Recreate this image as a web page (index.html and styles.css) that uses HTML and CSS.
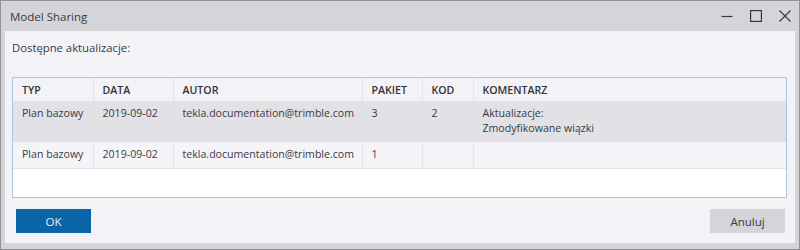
FILE: index.html
```html
<!DOCTYPE html>
<html lang="pl">
<head>
  <meta charset="UTF-8" />
  <title>Model Sharing</title>
  <link rel="stylesheet" href="styles.css">
</head>
<body>

  <div class="window">
    <!-- Title bar -->
    <div class="titlebar">
      <span class="title">Model Sharing</span>
      <div class="controls">
        <svg width="12" height="12" viewBox="0 0 12 12"><path d="M0.5 6.5h11" stroke="#3a3a3e" stroke-width="1.2"/></svg>
        <svg width="12" height="12" viewBox="0 0 12 12"><rect x="0.6" y="0.6" width="10.8" height="10.8" fill="none" stroke="#3a3a3e" stroke-width="1.2"/></svg>
        <svg width="12" height="12" viewBox="0 0 12 12"><path d="M0.5 0.5l11 11M11.5 0.5l-11 11" stroke="#3a3a3e" stroke-width="1.2"/></svg>
      </div>
    </div>

    <!-- Content -->
    <div class="content">
      <p class="label">Dostępne aktualizacje:</p>

      <div class="grid-box">
        <table class="updates">
          <thead>
            <tr>
              <th class="c-typ">TYP</th>
              <th class="c-data">DATA</th>
              <th class="c-autor">AUTOR</th>
              <th class="c-pakiet">PAKIET</th>
              <th class="c-kod">KOD</th>
              <th>KOMENTARZ</th>
            </tr>
          </thead>
          <tbody>
            <tr class="selected">
              <td>Plan bazowy</td>
              <td>2019-09-02</td>
              <td>tekla.documentation@trimble.com</td>
              <td>3</td>
              <td>2</td>
              <td>Aktualizacje:<br>Zmodyfikowane wiązki</td>
            </tr>
            <tr>
              <td>Plan bazowy</td>
              <td>2019-09-02</td>
              <td>tekla.documentation@trimble.com</td>
              <td>1</td>
              <td></td>
              <td></td>
            </tr>
          </tbody>
        </table>
      </div>

      <div class="buttons">
        <button class="btn btn-primary">OK</button>
        <button class="btn btn-cancel">Anuluj</button>
      </div>
    </div>
  </div>

</body>
</html>
```

FILE: styles.css
```css
/* Reset & Base */
* {
  margin: 0;
  padding: 0;
  box-sizing: border-box;
}

body, html {
  font-family: "Open Sans", "Noto Sans", sans-serif;
  font-size: 10.6px;
  color: #3a3a3e;
  background-color: #d4d4d9;
}

.window {
  width: 800px;
  height: 250px;
  display: flex;
  flex-direction: column;
  border: 1px solid #929297;
  background-color: #d4d4d9;
  padding: 0 4px 6px 4px;
}

.titlebar {
  height: 30px;
  display: flex;
  align-items: center;
  justify-content: space-between;
  padding-left: 5px;
}

.title {
  font-size: 11.5px;
  color: #3a3a3e;
}

.controls {
  display: flex;
  gap: 17px;
  padding-right: 4px;
}

.controls svg {
  width: 12px;
  height: 12px;
}

.content {
  flex: 1;
  display: flex;
  flex-direction: column;
  background-color: #f2f2f7;
  padding: 0 8px 0 7px;
}

.label {
  margin-top: 9px;
  height: 37px;
  font-size: 11.3px;
}

.grid-box {
  height: 121px;
  border: 1px solid #a9c4de;
  background-color: #ffffff;
}

.updates {
  width: 100%;
  border-collapse: collapse;
  table-layout: fixed;
}

.updates th,
.updates td {
  text-align: left;
  padding: 0 9px;
  border-right: 1px solid #e3e3e8;
  white-space: nowrap;
}

.updates th:last-child,
.updates td:last-child {
  border-right: none;
}

.updates th {
  height: 23px;
  font-weight: 600;
  font-size: 10.6px;
  color: #333337;
  background-color: #f2f2f7;
}

.c-typ { width: 80px; }
.c-data { width: 80px; }
.c-autor { width: 189px; }
.c-pakiet { width: 60px; }
.c-kod { width: 51px; }

.updates td {
  height: 26px;
  vertical-align: top;
  padding-top: 5px;
  line-height: 15px;
  background-color: #f5f5f9;
  border-bottom: 1px solid #e3e3e8;
}

.updates tr.selected td {
  height: 41px;
  background-color: #e1e1e6;
  border-right-color: #e1e1e6;
  border-bottom: none;
}

.buttons {
  display: flex;
  justify-content: space-between;
  padding: 11px 2px 0 4px;
}

.btn {
  width: 75px;
  height: 24px;
  border: none;
  font-family: inherit;
  font-size: 11.5px;
}

.btn-primary {
  background-color: #0a64a8;
  color: #e8eef5;
}

.btn-cancel {
  background-color: #d4d4d9;
  color: #3a3a3e;
}
```
